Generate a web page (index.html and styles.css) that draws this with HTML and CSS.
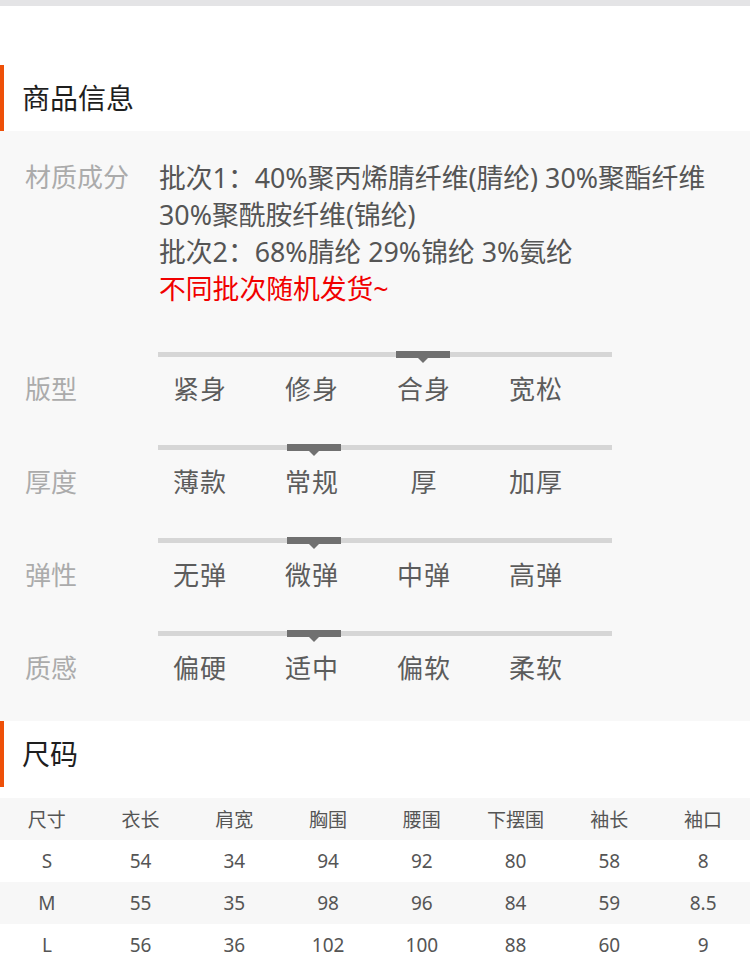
FILE: index.html
```html
<!DOCTYPE html>
<html lang="zh">
<head>
<meta charset="utf-8">
<title>商品信息</title>
<link rel="stylesheet" href="styles.css">
</head>
<body>
<div class="topbar"></div>

<section class="sec-head first"><h2>商品信息</h2></section>

<div class="panel">
  <div class="mat">
    <div class="label">材质成分</div>
    <div class="mat-text">
      <div>批次1：40%聚丙烯腈纤维(腈纶) 30%聚酯纤维<br>30%聚酰胺纤维(锦纶)</div>
      <div>批次2：68%腈纶 29%锦纶 3%氨纶</div>
      <div class="red">不同批次随机发货~</div>
    </div>
  </div>

  <div class="sliders">
    <div class="srow">
      <div class="track"><span class="thumb pos2"></span></div>
      <div class="line">
        <div class="label">版型</div>
        <div class="opts"><span>紧身</span><span>修身</span><span>合身</span><span>宽松</span></div>
      </div>
    </div>
    <div class="srow">
      <div class="track"><span class="thumb pos1"></span></div>
      <div class="line">
        <div class="label">厚度</div>
        <div class="opts"><span>薄款</span><span>常规</span><span>厚</span><span>加厚</span></div>
      </div>
    </div>
    <div class="srow">
      <div class="track"><span class="thumb pos1"></span></div>
      <div class="line">
        <div class="label">弹性</div>
        <div class="opts"><span>无弹</span><span>微弹</span><span>中弹</span><span>高弹</span></div>
      </div>
    </div>
    <div class="srow">
      <div class="track"><span class="thumb pos1"></span></div>
      <div class="line">
        <div class="label">质感</div>
        <div class="opts"><span>偏硬</span><span>适中</span><span>偏软</span><span>柔软</span></div>
      </div>
    </div>
  </div>
</div>

<section class="sec-head"><h2>尺码</h2></section>

<table class="size">
  <thead>
    <tr><th>尺寸</th><th>衣长</th><th>肩宽</th><th>胸围</th><th>腰围</th><th>下摆围</th><th>袖长</th><th>袖口</th></tr>
  </thead>
  <tbody>
    <tr><td>S</td><td>54</td><td>34</td><td>94</td><td>92</td><td>80</td><td>58</td><td>8</td></tr>
    <tr><td>M</td><td>55</td><td>35</td><td>98</td><td>96</td><td>84</td><td>59</td><td>8.5</td></tr>
    <tr><td>L</td><td>56</td><td>36</td><td>102</td><td>100</td><td>88</td><td>60</td><td>9</td></tr>
  </tbody>
</table>
</body>
</html>
```

FILE: styles.css
```css
* { box-sizing: border-box; }
html, body { margin: 0; padding: 0; background: #fff; }
body {
  width: 750px;
  font-family: "Noto Sans", "Noto Sans CJK SC", sans-serif;
  color: #555;
}
.topbar { height: 6px; background: #e4e4e6; }

.sec-head {
  height: 66px;
  border-left: 4px solid #ee5008;
  display: flex;
  align-items: center;
  padding-left: 18px;
}
.sec-head.first { margin-top: 59px; }
.sec-head h2 {
  margin: 0;
  font-size: 28px;
  font-weight: 400;
  color: #1e1e1e;
  line-height: 1;
}

.panel {
  background: #f8f8f8;
  padding: 28px 0 34px;
}
.label {
  width: 158px;
  padding-left: 25px;
  font-size: 26px;
  color: #ababab;
  flex: none;
}
.mat { display: flex; line-height: 37px; }
.mat .label { line-height: 37px; }
.mat-text { font-size: 26.8px; color: #555; padding-left: 1px; }
.red { color: #f10000; }

.sliders { margin-top: 45px; }
.srow { margin-bottom: 37px; }
.srow:last-child { margin-bottom: 0; }
.track {
  position: relative;
  margin-left: 158px;
  width: 454px;
  height: 5px;
  background: #d6d6d6;
}
.thumb {
  position: absolute;
  top: -1px;
  width: 54px;
  height: 7px;
  background: #707070;
}
.thumb::after {
  content: "";
  position: absolute;
  left: 22px;
  top: 7px;
  border-left: 5px solid transparent;
  border-right: 5px solid transparent;
  border-top: 5px solid #707070;
}
.pos0 { left: 16px; }
.pos1 { left: 129px; }
.pos2 { left: 238px; }
.pos3 { left: 349px; }

.line {
  display: flex;
  align-items: center;
  margin-top: 14px;
  line-height: 37px;
}
.opts {
  display: grid;
  grid-template-columns: repeat(4, 112px);
  margin-left: -14px;
  font-size: 26px;
  color: #5c5c5c;
  text-align: center;
  letter-spacing: 1px;
}

.size {
  width: 750px;
  border-collapse: collapse;
  table-layout: fixed;
  margin-top: 11px;
  font-size: 19px;
  color: #555;
}
.size th, .size td {
  height: 42px;
  padding: 0;
  text-align: center;
  font-weight: 400;
}
.size thead tr { background: #f7f7f7; }
.size tbody tr:nth-child(2) { background: #f7f7f7; }
```
